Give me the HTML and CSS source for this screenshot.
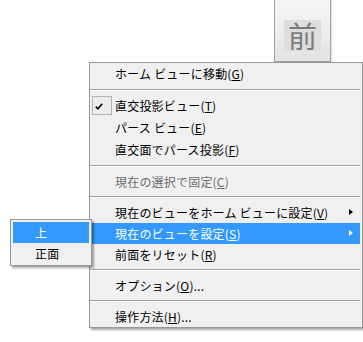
FILE: index.html
```html
<!DOCTYPE html>
<html lang="ja">
<head>
    <meta charset="UTF-8">
    <meta name="viewport" content="width=device-width, initial-scale=1.0">
    <title>ビュー メニュー</title>
    <link rel="stylesheet" href="styles.css">
</head>
<body>
    <div class="stage">
        <div class="cube">
            <div class="cube-face">前</div>
        </div>

        <div class="menu main-menu">
            <div class="item tall"><span class="mark"></span>ホーム ビューに移動(<u>G</u>)</div>
            <div class="sep"></div>
            <div class="item tall">
                <span class="mark checked">
                    <svg width="8" height="7" viewBox="0 0 8 7"><path d="M0.8 3.6 L2.9 5.8 L7.2 0.8" fill="none" stroke="#000" stroke-width="1.6"/></svg>
                </span>直交投影ビュー(<u>T</u>)
            </div>
            <div class="item tall"><span class="mark"></span>パース ビュー(<u>E</u>)</div>
            <div class="item tall"><span class="mark"></span>直交面でパース投影(<u>F</u>)</div>
            <div class="sep"></div>
            <div class="item disabled"><span class="mark"></span>現在の選択で固定(<u>C</u>)</div>
            <div class="sep"></div>
            <div class="item has-sub"><span class="mark"></span>現在のビューをホーム ビューに設定(<u>V</u>)<span class="arrow"></span></div>
            <div class="item has-sub active"><span class="mark"></span>現在のビューを設定(<u>S</u>)<span class="arrow"></span></div>
            <div class="item"><span class="mark"></span>前面をリセット(<u>R</u>)</div>
            <div class="sep"></div>
            <div class="item"><span class="mark"></span>オプション(<u>O</u>)...</div>
            <div class="sep"></div>
            <div class="item"><span class="mark"></span>操作方法(<u>H</u>)...</div>
        </div>

        <div class="menu sub-menu">
            <div class="item active">上</div>
            <div class="item">正面</div>
        </div>
    </div>
</body>
</html>
```

FILE: styles.css
```css
* {
    margin: 0;
    padding: 0;
    box-sizing: border-box;
}

body {
    font-family: "Noto Sans CJK JP", "Noto Sans", sans-serif;
    background: #ffffff;
    color: #000000;
}

.stage {
    position: relative;
    width: 363px;
    height: 342px;
    overflow: hidden;
}

/* view cube face */
.cube {
    position: absolute;
    left: 274px;
    top: -4px;
    width: 57px;
    height: 66px;
    border: 1px solid #a3a3a3;
    background: linear-gradient(180deg, #f6f6f6 0%, #ececec 60%, #e2e2e2 100%);
    box-shadow: 1px 2px 2px rgba(0, 0, 0, 0.15);
}

.cube-face {
    position: absolute;
    left: 9px;
    top: 23px;
    width: 37px;
    height: 31px;
    background: #dedede;
    color: #7b7b7b;
    font-size: 29px;
    line-height: 31px;
    text-align: center;
}

/* context menus */
.menu {
    position: absolute;
    background: #f0f0f0;
    border: 1px solid #979797;
    box-shadow: 2px 2px 2px rgba(0, 0, 0, 0.35);
    font-size: 12px;
    letter-spacing: 0.2px;
}

.main-menu {
    left: 89px;
    top: 62px;
    width: 274px;
    padding: 0 2px 0 0;
}

.item {
    position: relative;
    display: flex;
    align-items: center;
    height: 21px;
    padding-left: 2px;
    padding-bottom: 1px;
    white-space: nowrap;
}

.item.tall {
    height: 22px;
}

.item u {
    text-decoration: underline;
    text-underline-offset: 1px;
}

.item.disabled {
    color: #6d6d6d;
}

.item.active {
    background: #3399ff;
    color: #ffffff;
}

.mark {
    display: flex;
    align-items: flex-end;
    justify-content: flex-start;
    width: 20px;
    height: 19px;
    margin-right: 3px;
    flex-shrink: 0;
}

.mark.checked {
    border: 1px solid #b4b4b4;
    background: #ececec;
    padding: 0 0 4px 2px;
}

.arrow {
    position: absolute;
    right: 7px;
    top: 7px;
    width: 0;
    height: 0;
    border-top: 3.5px solid transparent;
    border-bottom: 3.5px solid transparent;
    border-left: 4px solid #000000;
}

.item.active .arrow {
    border-left-color: #ffffff;
}

.sep {
    height: 10px;
    padding-top: 4px;
}

.sep::before {
    content: '';
    display: block;
    height: 1px;
    background: #a0a0a0;
    border-bottom: 1px solid #ffffff;
    box-sizing: content-box;
}

.sub-menu {
    left: 10px;
    top: 219px;
    width: 82px;
    padding: 2px 2px 1px 2px;
}

.sub-menu .item {
    height: 21px;
    padding-left: 22px;
}
```
